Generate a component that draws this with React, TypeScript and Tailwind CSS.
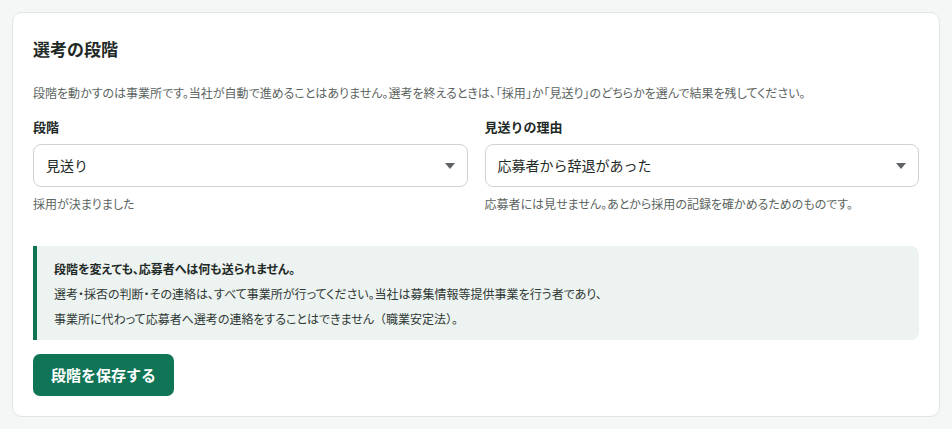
import React from "react";

function Caret() {
  return (
    <svg width="10" height="6" viewBox="0 0 10 6" className="shrink-0">
      <path d="M0 0 L10 0 L5 6 Z" fill="#5f6368" />
    </svg>
  );
}

function SelectBox({ value }: { value: string }) {
  return (
    <div className="flex h-[43px] items-center justify-between rounded-[8px] border border-[#cfd4d3] bg-white pl-[12px] pr-[12px] text-[14px] text-[#1f2a27]">
      <span>{value}</span>
      <Caret />
    </div>
  );
}

export default function App() {
  return (
    <div
      className="min-h-[429px] bg-[#f5f6f6] p-[12px] text-[#1f2a27]"
      style={{ fontFamily: '"Noto Sans CJK JP", "Noto Sans", sans-serif' }}
    >
      <div className="rounded-[10px] border border-[#e2e5e4] bg-white px-[20px] pb-[20px] pt-[23px]">
        <h2 className="text-[17px] font-bold leading-[26px] text-[#1f2a27]">選考の段階</h2>
        <p className="mt-[22px] text-[12px] leading-[18px] text-[#5b6461] [font-feature-settings:'palt']">
          段階を動かすのは事業所です。当社が自動で進めることはありません。選考を終えるときは、「採用」か「見送り」のどちらかを選んで結果を残してください。
        </p>
        <div className="mt-[16px] grid grid-cols-2 gap-[17px]">
          <div className="flex flex-col">
            <label className="text-[13px] font-bold leading-[18px]">段階</label>
            <div className="mt-[8px]">
              <SelectBox value="見送り" />
            </div>
            <p className="mt-[8px] text-[12px] leading-[18px] text-[#5b6461] [font-feature-settings:'palt']">採用が決まりました</p>
          </div>
          <div className="flex flex-col">
            <label className="text-[13px] font-bold leading-[18px]">見送りの理由</label>
            <div className="mt-[8px]">
              <SelectBox value="応募者から辞退があった" />
            </div>
            <p className="mt-[8px] text-[12px] leading-[18px] text-[#5b6461] [font-feature-settings:'palt']">
              応募者には見せません。あとから採用の記録を確かめるためのものです。
            </p>
          </div>
        </div>
        <div className="mt-[33px] rounded-r-[8px] border-l-[4px] border-[#0f7354] bg-[#edf3f1] pb-[9px] pl-[17px] pr-[16px] pt-[10px] text-[12px] leading-[25px]">
          <p className="font-bold text-[#1f2a27] [font-feature-settings:'palt']">段階を変えても、応募者へは何も送られません。</p>
          <p className="text-[#2f3835]">
            <span className="[font-feature-settings:'palt']">
              選考・採否の判断・その連絡は、すべて事業所が行ってください。当社は募集情報等提供事業を行う者であり、
            </span>
            <br />
            <span className="[font-feature-settings:'palt']">事業所に代わって応募者へ選考の連絡をすることはできません</span>
            <span>（職業安定法）。</span>
          </p>
        </div>
        <button className="mt-[14px] h-[42px] rounded-[7px] bg-[#0f7556] px-[18px] text-[15px] font-bold text-white">
          段階を保存する
        </button>
      </div>
    </div>
  );
}
